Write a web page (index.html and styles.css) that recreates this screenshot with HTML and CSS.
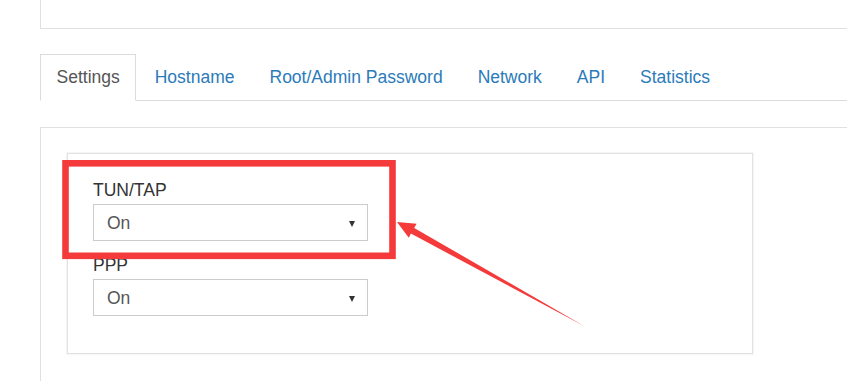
FILE: index.html
```html
<!DOCTYPE html>
<html lang="en">
<head>
<meta charset="utf-8">
<title>Settings</title>
<link rel="stylesheet" href="styles.css">
</head>
<body>
  <div class="topbox"></div>
  <ul class="tabs">
    <li class="tab active"><a href="#">Settings</a></li>
    <li class="tab"><a href="#">Hostname</a></li>
    <li class="tab"><a href="#">Root/Admin Password</a></li>
    <li class="tab"><a href="#">Network</a></li>
    <li class="tab"><a href="#">API</a></li>
    <li class="tab"><a href="#">Statistics</a></li>
  </ul>
  <div class="panel">
    <div class="well">
      <div class="group">
        <label class="label">TUN/TAP</label>
        <div class="select"><span>On</span><i class="caret"></i></div>
      </div>
      <div class="group">
        <label class="label">PPP</label>
        <div class="select"><span>On</span><i class="caret"></i></div>
      </div>
    </div>
  </div>
  <svg class="annot" width="847" height="381" viewBox="0 0 847 381" xmlns="http://www.w3.org/2000/svg">
    <rect x="65.5" y="163.3" width="327" height="92.5" fill="none" stroke="#f43a3a" stroke-width="6.6"/>
    <polygon fill="#f43a3a" points="397,222 416.6,223.7 414.2,227.9 584,326 410.9,233.6 408.8,237.7"/>
  </svg>
</body>
</html>
```
FILE: styles.css
```css
html, body {
  margin: 0;
  padding: 0;
  background: #fff;
}
body {
  font-family: "Liberation Sans", Arial, sans-serif;
  font-size: 17.5px;
  line-height: 25px;
  color: #333;
  width: 847px;
  height: 381px;
  overflow: hidden;
  position: relative;
}
.topbox {
  margin-left: 40px;
  height: 28px;
  border-left: 1px solid #e0e0e0;
  border-bottom: 1px solid #e0e0e0;
}
.tabs {
  list-style: none;
  margin: 25px 0 0 40px;
  padding: 0;
  display: flex;
  border-bottom: 1px solid #dcdcdc;
}
.tab {
  margin: 0 2px -1px 0;
}
.tab a {
  display: block;
  padding: 10px 15.5px;
  border: 1px solid transparent;
  color: #2b7bba;
  text-decoration: none;
  line-height: 25px;
}
.tab.active a {
  color: #555;
  background: #fff;
  border-color: #dcdcdc;
  border-bottom-color: transparent;
}
.panel {
  margin: 26px 0 0 40px;
  border-top: 1px solid #e0e0e0;
  border-left: 1px solid #e0e0e0;
  padding: 25px 0 0 26px;
  height: 228px;
}
.well {
  width: 659px;
  border: 1px solid #e2e2e2;
  box-shadow: 0 0 1px 1px #f6f6f6;
  padding: 24px 0 37px 25px;
}
.group + .group {
  margin-top: 12px;
}
.label {
  display: block;
  margin-bottom: 1px;
  color: #333;
}
.select {
  width: 248px;
  height: 35px;
  border: 1px solid #cccccc;
  display: flex;
  align-items: center;
  justify-content: space-between;
  padding: 0 12px 0 13px;
  color: #555;
}
.select span {
  line-height: 35px;
  padding-top: 1px;
}
.caret {
  width: 0;
  height: 0;
  border-left: 3px solid transparent;
  border-right: 3px solid transparent;
  border-top: 6px solid #333;
  margin-top: 2px;
}
.annot {
  position: absolute;
  left: 0;
  top: 0;
}
```
